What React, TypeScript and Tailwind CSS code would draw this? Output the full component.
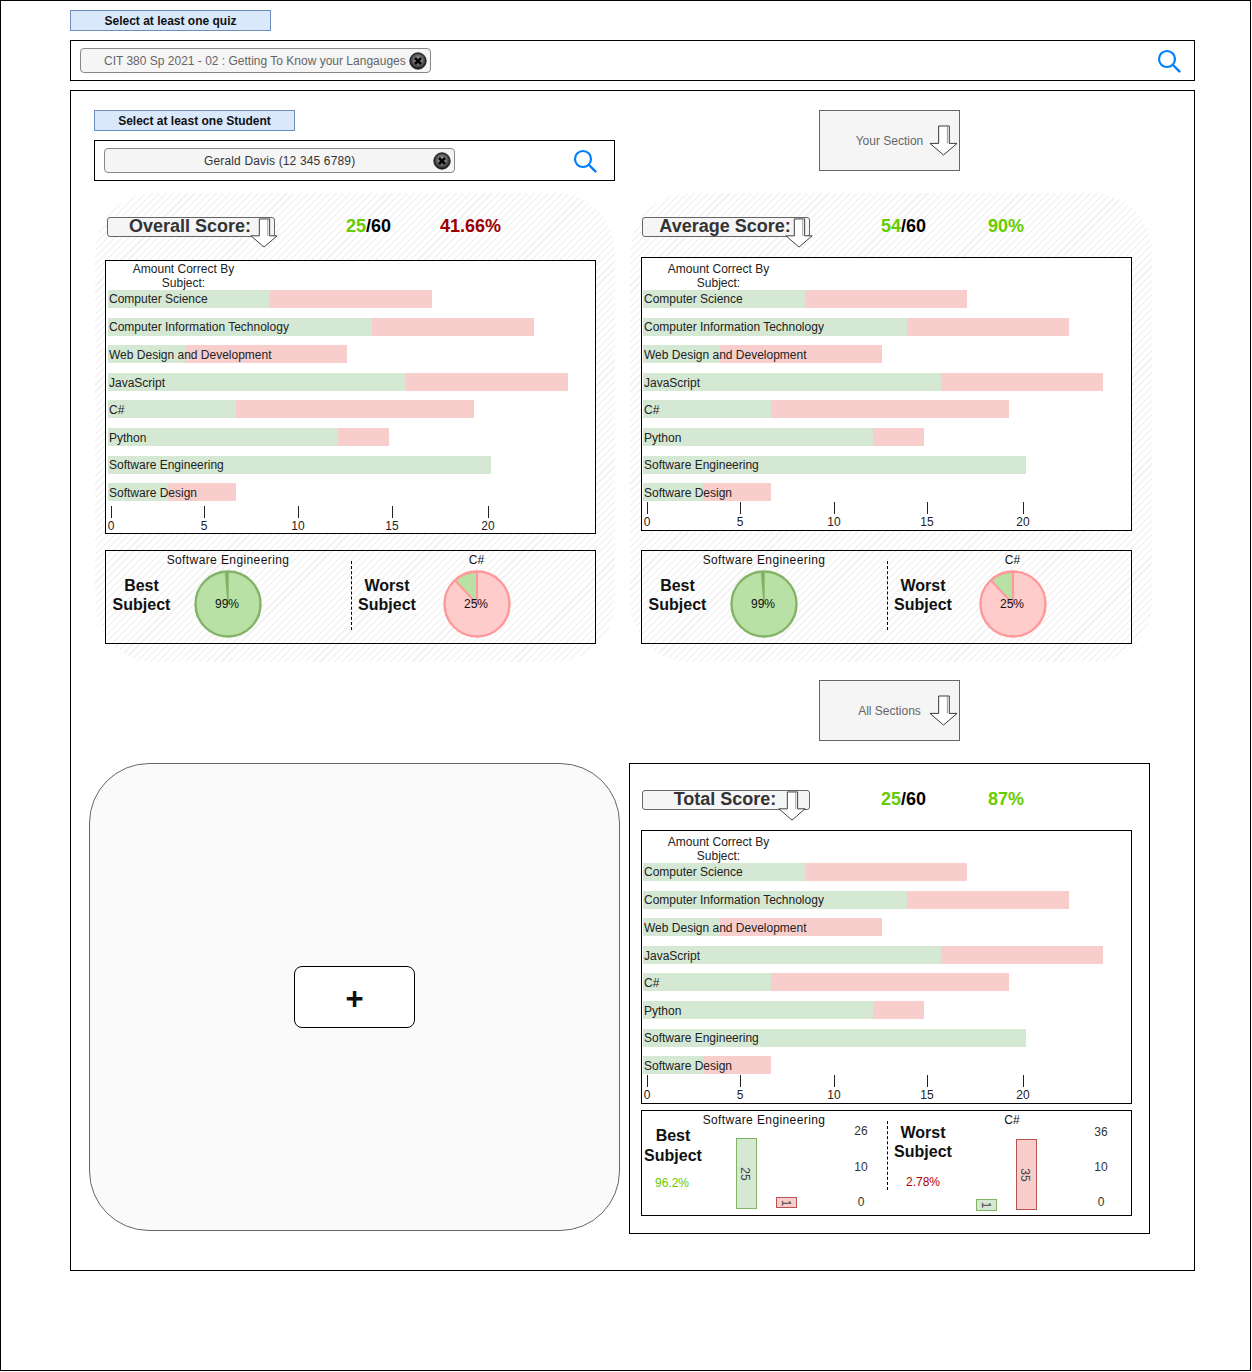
import React from "react";

const SUBJECTS: [string, number, number, string, string][] = [
  ["Computer Science", 162, 162, "mb-[10px]", "top-[2px]"],
  ["Computer Information Technology", 264, 162, "mb-[9px]", "top-[2px]"],
  ["Web Design and Development", 77, 162, "mb-[10px]", "top-[3px]"],
  ["JavaScript", 298, 162, "mb-[9px]", "top-[3px]"],
  ["C#", 128, 238, "mb-[10px]", "top-[3px]"],
  ["Python", 230, 51, "mb-[10px]", "top-[3px]"],
  ["Software Engineering", 383, 0, "mb-[9px]", "top-[2px]"],
  ["Software Design", 60, 68, "mb-0", "top-[3px]"],
];

const TICKS_A: [string, string][] = [
  ["0", "w-[93px]"],
  ["5", "w-[94px]"],
  ["10", "w-[94px]"],
  ["15", "w-[96px]"],
  ["20", "w-[40px]"],
];

const TICKS_B: [string, string][] = [
  ["0", "w-[93px]"],
  ["5", "w-[94px]"],
  ["10", "w-[93px]"],
  ["15", "w-[96px]"],
  ["20", "w-[40px]"],
];

function Arrow({ className }: { className: string }) {
  return (
    <svg className={className} viewBox="0 0 30 32" fill="none">
      <path d="M10 1H21V19H29L15 31L1 19H10Z" fill="#fff" stroke="#333" strokeWidth="1" />
      <path d="M19 1V19" stroke="#999" strokeWidth="1" />
    </svg>
  );
}

function SearchIcon() {
  return (
    <svg width="24" height="24" viewBox="0 0 24 24" fill="none" className="shrink-0">
      <circle cx="10" cy="10" r="8" stroke="#007fff" strokeWidth="2.2" />
      <path d="M16 16L22.4 22.4" stroke="#007fff" strokeWidth="2.4" strokeLinecap="round" />
    </svg>
  );
}

function CloseIcon() {
  return (
    <svg width="18" height="18" viewBox="0 0 18 18" className="shrink-0">
      <defs>
        <radialGradient id="closeShade" cx="50%" cy="45%" r="55%">
          <stop offset="0%" stopColor="#bdbdbd" />
          <stop offset="55%" stopColor="#666" />
          <stop offset="100%" stopColor="#0c0c0c" />
        </radialGradient>
      </defs>
      <circle cx="9" cy="9" r="8.2" fill="url(#closeShade)" stroke="#1a1a1a" strokeWidth="0.9" />
      <path d="M6 6L12 12M12 6L6 12" stroke="#000" strokeWidth="2.6" />
    </svg>
  );
}

function Tag({ children }: { children: React.ReactNode }) {
  return (
    <div className="w-[201px] h-[21px] flex items-center justify-center bg-[#dae8fc] border border-[#6c8ebf] text-[12px] font-bold text-[#111] whitespace-nowrap">
      {children}
    </div>
  );
}

function Dropdown({ label }: { label: string }) {
  return (
    <div className="relative w-[141px] h-[61px] flex items-center justify-center bg-[#f5f5f5] border border-[#666] text-[12px] text-[#666]">
      <span className="whitespace-nowrap">{label}</span>
      <Arrow className="absolute right-[1px] top-[14px] w-[29px] h-[31px]" />
    </div>
  );
}

function ScoreHeader({
  title,
  score,
  percent,
  percentClass,
  arrowClass,
}: {
  title: string;
  score: string;
  percent: string;
  percentClass: string;
  arrowClass: string;
}) {
  return (
    <div className="flex items-center h-[20px] text-[18px] leading-[18px] font-bold">
      <div className="relative w-[168px] h-[20px] shrink-0 pb-[2px] pr-[2px] flex items-center justify-center bg-[#f5f5f5] border border-[#666] rounded-[3px] text-[#333]">
        <span>{title}</span>
        <Arrow className={arrowClass} />
      </div>
      <div className="ml-[71px] mb-[2px] whitespace-nowrap">
        <span className="text-[#66cc00]">{score}</span>
        <span className="text-black">/60</span>
      </div>
      <div className={percentClass}>{percent}</div>
    </div>
  );
}

function Chart({
  innerClass,
  axisClass,
  ticks,
}: {
  innerClass: string;
  axisClass: string;
  ticks: [string, string][];
}) {
  return (
    <div className="w-[491px] h-[274px] bg-white border border-black text-[12px] leading-[14px] text-[#222]">
      <div className={innerClass}>
        <div className="w-[151px] text-center">
          Amount Correct By
          <br />
          Subject:
        </div>
        <div className="flex flex-col">
          {SUBJECTS.map(([name, good, bad, gapClass, textClass]) => (
            <div key={name} className={`relative flex h-[18px] ${gapClass}`}>
              <div className="bg-[#d5e8d4]" style={{ width: good }} />
              <div className="bg-[#f8cecc]" style={{ width: bad }} />
              <span className={`absolute left-[1px] whitespace-nowrap ${textClass}`}>{name}</span>
            </div>
          ))}
        </div>
        <div className={axisClass}>
          {ticks.map(([label, width]) => (
            <div key={label} className={width}>
              <div className="w-px h-[12px] bg-[#222]" />
              <span className="inline-block mt-[1px] -translate-x-1/2">{label}</span>
            </div>
          ))}
        </div>
      </div>
    </div>
  );
}

function BestPie() {
  return (
    <svg width="68" height="68" viewBox="0 0 68 68" className="mt-[3px]">
      <circle cx="34" cy="34" r="32.5" fill="#b9e0a5" stroke="#82b366" strokeWidth="2.4" />
      <path d="M34 34L31.5 2H34Z" fill="#82b366" stroke="#82b366" strokeWidth="1.4" />
      <text x="33" y="38" textAnchor="middle" fontSize="12" fill="#111">99%</text>
    </svg>
  );
}

function WorstPie() {
  return (
    <svg width="68" height="68" viewBox="0 0 68 68" className="mt-[3px]">
      <circle cx="34" cy="34" r="32.5" fill="#ffcccc" stroke="#ff9999" strokeWidth="2.4" />
      <path d="M34 34V2A32 32 0 0 0 12 10.5Z" fill="#b9e0a5" stroke="#ff9999" strokeWidth="2" />
      <text x="33" y="38" textAnchor="middle" fontSize="12" fill="#111">25%</text>
    </svg>
  );
}

function PiePanel() {
  return (
    <div className="w-[491px] h-[94px] flex border border-black text-[12px] leading-[14px] text-[#111]">
      <div className="ml-[5px] w-[61px] pt-[25px] text-center text-[16px] leading-[19px] font-bold text-[#111] whitespace-nowrap">
        Best
        <br />
        Subject
      </div>
      <div className="w-[112px] pt-[2px] flex flex-col items-center">
        <div className="whitespace-nowrap tracking-[0.4px]">Software Engineering</div>
        <BestPie />
      </div>
      <div className="ml-[67px] mt-[10px] h-[69px] w-0 border-l border-dashed border-black" />
      <div className="ml-[5px] w-[60px] pt-[25px] text-center text-[16px] leading-[19px] font-bold text-[#111] whitespace-nowrap">
        Worst
        <br />
        Subject
      </div>
      <div className="ml-[4px] w-[112px] pt-[2px] flex flex-col items-center">
        <div className="-ml-[1px]">C#</div>
        <WorstPie />
      </div>
    </div>
  );
}

function MiniBar({ value, barClass, labelClass }: { value: string; barClass: string; labelClass: string }) {
  return (
    <div className={barClass}>
      <span className={labelClass}>{value}</span>
    </div>
  );
}

function AxisNumbers({ top, className }: { top: string; className: string }) {
  return (
    <div className={className}>
      <span>{top}</span>
      <span>10</span>
      <span>0</span>
    </div>
  );
}

const TALL_LABEL = "-translate-x-[2px] rotate-90 text-[12px] leading-none text-[#444]";
const SHORT_LABEL = "rotate-90 text-[12px] leading-none text-[#444]";

function BarPanel() {
  return (
    <div className="w-[491px] h-[106px] flex border border-black text-[12px] leading-[14px] text-[#111]">
      <div className="ml-[2px] w-[58px] pt-[15px] flex flex-col items-center text-[16px] leading-[20px] font-bold text-[#111] whitespace-nowrap">
        <div>Best</div>
        <div>Subject</div>
        <div className="mt-[10px] mr-[2px] text-[12px] leading-[14px] font-normal text-[#66cc00]">96.2%</div>
      </div>
      <div className="relative w-[124px] pt-[2px] flex flex-col items-center">
        <div className="whitespace-nowrap tracking-[0.4px]">Software Engineering</div>
        <div className="absolute left-[34px] bottom-[6px] flex items-end gap-[19px]">
          <MiniBar value="25" labelClass={TALL_LABEL} barClass="w-[21px] h-[71px] flex items-center justify-center bg-[#d5e8d4] border border-[#82b366]" />
          <MiniBar value="1" labelClass={SHORT_LABEL} barClass="mb-[1px] w-[21px] h-[11px] flex items-center justify-center bg-[#f8cecc] border border-[#b85450]" />
        </div>
      </div>
      <AxisNumbers top="26" className="w-[61px] h-[98px] pl-[28px] pr-[19px] pt-[13px] flex flex-col justify-between items-center text-[#333]" />
      <div className="mt-[10px] h-[69px] w-0 border-l border-dashed border-black" />
      <div className="ml-[6px] w-[58px] pt-[12px] flex flex-col items-center text-[16px] leading-[19px] font-bold text-[#111] whitespace-nowrap">
        <div>Worst</div>
        <div>Subject</div>
        <div className="mt-[14px] text-[12px] leading-[14px] font-normal text-[#b20000]">2.78%</div>
      </div>
      <div className="relative w-[120px] pt-[2px] flex flex-col items-center">
        <div>C#</div>
        <div className="absolute left-[24px] bottom-[5px] flex items-end gap-[19px]">
          <MiniBar value="1" labelClass={SHORT_LABEL} barClass="-mb-[1px] w-[21px] h-[12px] flex items-center justify-center bg-[#d5e8d4] border border-[#82b366]" />
          <MiniBar value="35" labelClass={TALL_LABEL} barClass="w-[21px] h-[71px] flex items-center justify-center bg-[#f8cecc] border border-[#b85450]" />
        </div>
      </div>
      <AxisNumbers top="36" className="w-[58px] h-[98px] pt-[14px] flex flex-col justify-between items-center text-[#333]" />
    </div>
  );
}

const HATCH =
  "bg-[repeating-linear-gradient(135deg,#f3f3f3_0,#f3f3f3_1.5px,#ffffff_1.5px,#ffffff_5px)]";

export default function App() {
  return (
    <div className="w-[1251px] h-[1371px] pl-[69px] pt-[9px] bg-white border border-black text-[12px] font-['Liberation_Sans',Arial,sans-serif]">
      <Tag>Select at least one quiz</Tag>
      <div className="mt-[9px] w-[1125px] h-[41px] pl-[9px] pr-[13px] flex items-center justify-between border border-black">
        <div className="w-[351px] h-[25px] pl-[23px] pr-[3px] flex items-center justify-between bg-[#f5f5f5] border border-[#888] rounded-[4px] text-[#666] whitespace-nowrap">
          <span>CIT 380 Sp 2021 - 02 : Getting To Know your Langauges</span>
          <CloseIcon />
        </div>
        <SearchIcon />
      </div>

      <div className="mt-[9px] w-[1125px] h-[1181px] pt-[19px] border border-black">
        <div className="flex">
          <div className="ml-[23px] w-[521px]">
            <Tag>Select at least one Student</Tag>
            <div className="mt-[9px] h-[41px] pl-[9px] pr-[17px] flex items-center justify-between border border-black">
              <div className="relative w-[351px] h-[25px] pr-[3px] flex items-center justify-end bg-[#f5f5f5] border border-[#888] rounded-[4px] text-[#333] whitespace-nowrap">
                <span className="absolute left-[99px] tracking-[0.15px]">Gerald Davis (12 345 6789)</span>
                <CloseIcon />
              </div>
              <SearchIcon />
            </div>
          </div>
          <div className="ml-[204px]">
            <Dropdown label="Your Section" />
          </div>
        </div>

        <div className="mt-[12px] ml-[24px] flex gap-[15px]">
          <div className={`w-[520px] h-[469px] pl-[10px] pt-[24px] rounded-[60px] ${HATCH}`}>
            <div className="pl-[2px]">
              <ScoreHeader
                title="Overall Score:"
                score="25"
                percent="41.66%"
                percentClass="ml-[49px] mb-[2px] text-[#990000]"
                arrowClass="absolute left-[141px] top-[0px] w-[30px] h-[30px]"
              />
            </div>
            <div className="mt-[23px]">
              <Chart innerClass="pl-[2px] pt-[1px]" axisClass="flex mt-[5px] pl-[3px]" ticks={TICKS_A} />
            </div>
            <div className="mt-[16px]">
              <PiePanel />
            </div>
          </div>
          <div className={`w-[522px] h-[469px] pl-[11px] pt-[24px] rounded-[60px] ${HATCH}`}>
            <div className="pl-[1px]">
              <ScoreHeader
                title="Average Score:"
                score="54"
                percent="90%"
                percentClass="ml-[62px] mb-[2px] text-[#66cc00]"
                arrowClass="absolute left-[141px] top-[0px] w-[30px] h-[30px]"
              />
            </div>
            <div className="mt-[20px]">
              <Chart innerClass="pl-[1px] pt-[4px]" axisClass="flex mt-[1px] pl-[4px]" ticks={TICKS_B} />
            </div>
            <div className="mt-[19px]">
              <PiePanel />
            </div>
          </div>
        </div>

        <div className="mt-[18px] ml-[748px]">
          <Dropdown label="All Sections" />
        </div>

        <div className="mt-[22px] ml-[18px] flex">
          <div className="w-[531px] h-[468px] flex items-center justify-center bg-[#fafafa] border border-[#666] rounded-[60px]">
            <div className="w-[121px] h-[62px] pt-[2px] flex items-center justify-center bg-white border border-black rounded-[8px] text-[31px] leading-none font-bold text-[#111]">
              +
            </div>
          </div>
          <div className="ml-[9px] w-[521px] h-[471px] pl-[11px] pt-[26px] border border-black">
            <div className="pl-[1px]">
              <ScoreHeader
                title="Total Score:"
                score="25"
                percent="87%"
                percentClass="ml-[62px] mb-[2px] text-[#66cc00]"
                arrowClass="absolute left-[134px] top-[0px] w-[30px] h-[30px]"
              />
            </div>
            <div className="mt-[20px]">
              <Chart innerClass="pl-[1px] pt-[4px]" axisClass="flex mt-[1px] pl-[4px]" ticks={TICKS_B} />
            </div>
            <div className="mt-[6px]">
              <BarPanel />
            </div>
          </div>
        </div>
      </div>
    </div>
  );
}
